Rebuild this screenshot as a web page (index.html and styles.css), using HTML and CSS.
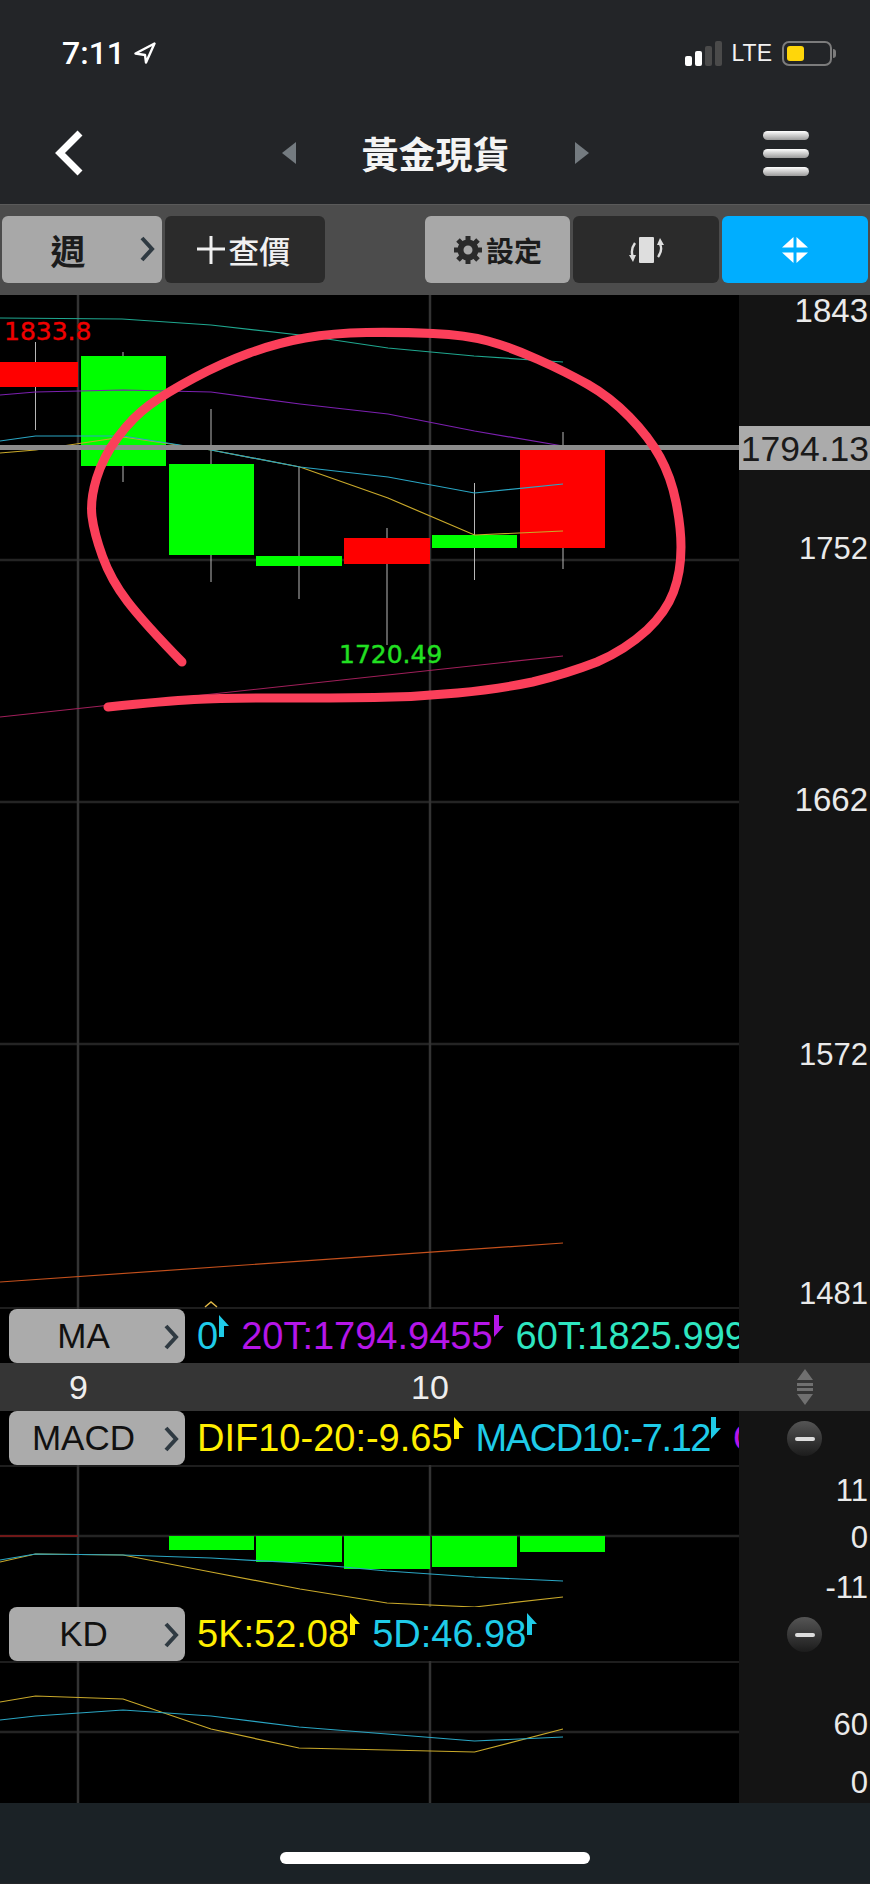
FILE: index.html
```html
<!DOCTYPE html>
<html lang="zh-Hant">
<head>
    <meta charset="UTF-8">
    <meta name="viewport" content="width=device-width, initial-scale=1.0">
    <title>黃金現貨</title>
    <link rel="stylesheet" href="styles.css">
</head>
<body>
    <div class="status-bar">
        <div class="clock">
            <span>7:11</span>
            <svg class="location" viewBox="0 0 22 22"><path d="M20.5 1.5 L1.5 11.5 L11 13 L12 20.5 Z"/></svg>
        </div>
        <div class="status-right">
            <div class="signal"><i class="s1"></i><i class="s2"></i><i class="s3"></i><i class="s4"></i></div>
            <span class="lte">LTE</span>
            <div class="battery"><div class="battery-fill"></div></div>
            <div class="battery-tip"></div>
        </div>
    </div>

    <div class="nav-bar">
        <svg class="back" viewBox="0 0 28 46"><path d="M25 3 L5 23 L25 43"/></svg>
        <div class="nav-title">
            <div class="tri tri-left"></div>
            <h1>黃金現貨</h1>
            <div class="tri tri-right"></div>
        </div>
        <div class="menu"><i></i><i></i><i></i></div>
    </div>

    <div class="toolbar">
        <div class="btn btn-light btn-period">
            <span>週</span>
            <svg class="chev" viewBox="0 0 16 26"><path d="M3 2 L13 13 L3 24"/></svg>
        </div>
        <div class="btn btn-dark btn-quote">
            <svg class="plus" viewBox="0 0 28 28"><path d="M0 13 H28 M14 0 V28"/></svg>
            <span>查價</span>
        </div>
        <div class="toolbar-gap"></div>
        <div class="btn btn-light btn-wide btn-setting">
            <svg class="gear" viewBox="0 0 30 30">
                <circle class="gear-ring" cx="15" cy="15" r="7.5"/>
                <path class="gear-teeth" d="M15 1 V7 M15 23 V29 M1 15 H7 M23 15 H29 M5 5 L9.5 9.5 M20.5 20.5 L25 25 M25 5 L20.5 9.5 M9.5 20.5 L5 25"/>
            </svg>
            <span>設定</span>
        </div>
        <div class="btn btn-dark btn-wide">
            <svg class="rotate" viewBox="0 0 35 26">
                <rect x="10" y="0" width="15" height="26" rx="1"/>
                <path class="rotate-arc" d="M6 6 Q1 13 4 20 M29 20 Q34 13 31 7"/>
                <path d="M0 18 H7 L4 25 Z M28 8 H35 L31 1 Z"/>
            </svg>
        </div>
        <div class="btn btn-blue btn-wide">
            <svg class="expand" viewBox="0 0 26 26">
                <path d="M11.5 0 V10.5 H0 Z M14.5 0 V10.5 H26 Z M0 15.5 H11.5 V26 Z M26 15.5 H14.5 V26 Z"/>
            </svg>
        </div>
    </div>

    <!-- viewBox uses page y so the numbers read the same as the screenshot -->
    <svg class="chart chart-main" viewBox="0 295 870 1014">
        <rect class="side" x="739" y="295" width="131" height="1014"/>
        <path class="grid-h" d="M0 560 H739 M0 802 H739 M0 1044 H739"/>
        <path class="grid-edge" d="M0 1308 H739"/>
        <path class="grid-v" d="M78 295 V1309 M430 295 V1309"/>

        <path class="wick" d="M35.5 342 V430 M123 352 V482 M211 409 V582 M299 467 V599 M387 528 V645 M474.5 483 V580 M563 432 V569"/>
        <rect class="up" x="0" y="362" width="78" height="25"/>
        <rect class="down" x="81" y="356" width="85" height="110"/>
        <rect class="down" x="169" y="464" width="85" height="91"/>
        <rect class="down" x="256" y="556" width="86" height="10"/>
        <rect class="up" x="344" y="538" width="86" height="26"/>
        <rect class="down" x="432" y="535" width="85" height="13"/>
        <rect class="up" x="520" y="450" width="85" height="98"/>

        <polyline class="ln ln-teal" points="0,318 122,319 211,325 300,335 388,348 474,356 563,362"/>
        <polyline class="ln ln-purple" points="0,395 35.5,392 123,390 211,392 300,404 388,414 474.5,431 563,446"/>
        <polyline class="ln ln-yellow" points="0,453 35.5,450 123,437 211,450 300,467 388,498 474.5,535 563,531"/>
        <polyline class="ln ln-cyan" points="0,441 35.5,436 123,436 211,450 300,467 388,477 474.5,493 563,484"/>
        <polyline class="ln ln-maroon" points="0,717 563,656"/>
        <polyline class="ln ln-orange" points="0,1282 563,1243"/>

        <rect class="price-line" x="0" y="445" width="739" height="5"/>
        <text class="mark mark-high" x="4" y="340">1833.8</text>
        <text class="mark mark-low" x="339" y="663">1720.49</text>
        <polyline class="caret" points="205,1307 211,1302 217,1307"/>

        <path class="scribble" d="M182 662 Q144 623 127.5 601.5 Q111 580 102.5 556.5 Q94 533 92 516.5 Q90 500 96.5 478.5 Q103 457 118 437 Q133 417 149.5 405 Q166 393 194 378 Q222 363 249.5 353 Q277 343 305 338 Q333 333 366.5 332.5 Q400 332 433 333.5 Q466 335 488 341 Q510 347 538 359.5 Q566 372 588 384.5 Q610 397 629.5 417 Q649 437 660 457 Q671 477 676 502 Q681 527 681 547 Q681 572 673.5 592 Q666 612 647 630 Q625 650 597 662 Q566 674 532.5 682 Q499 689 457.5 693 Q416 697 374.5 697.5 Q333 698 277.5 698 Q222 698 194 699.5 Q166 701 108 707"/>

        <rect class="price-box" x="739" y="426" width="131" height="44"/>
        <text class="price-text" x="869" y="461">1794.13</text>
        <text class="axis axis-wide" x="868" y="322">1843</text>
        <text class="axis" x="868" y="559">1752</text>
        <text class="axis axis-wide" x="868" y="811">1662</text>
        <text class="axis" x="868" y="1065">1572</text>
        <text class="axis" x="868" y="1304">1481</text>
    </svg>

    <div class="row">
        <div class="row-main">
            <div class="row-btn"><span>MA</span><svg class="chev" viewBox="0 0 16 26"><path d="M3 2 L13 13 L3 24"/></svg></div>
            <div class="row-values">
                <span class="c-cyan">0<svg class="tick" viewBox="0 0 10 22"><path d="M0 0 L10 11 H5 V22 H0 Z"/></svg></span>
                <span class="c-purple">20T:1794.9455<svg class="tick" viewBox="0 0 10 22"><path d="M0 22 L10 11 H5 V0 H0 Z"/></svg></span>
                <span class="c-teal">60T:1825.9999</span>
            </div>
        </div>
        <div class="row-side"></div>
    </div>

    <div class="x-axis">
        <div class="x-labels">
            <span class="x-nine">9</span>
            <span class="x-ten">10</span>
        </div>
        <div class="x-side">
            <svg class="drag" viewBox="0 0 18 36"><path d="M9 0 L17 11 H1 Z M1 14 H17 V17 H1 Z M1 19 H17 V22 H1 Z M1 25 H17 L9 36 Z"/></svg>
        </div>
    </div>

    <div class="row">
        <div class="row-main">
            <div class="row-btn"><span>MACD</span><svg class="chev" viewBox="0 0 16 26"><path d="M3 2 L13 13 L3 24"/></svg></div>
            <div class="row-values">
                <span class="c-yellow">DIF10-20:-9.65<svg class="tick" viewBox="0 0 10 22"><path d="M0 0 L10 11 H5 V22 H0 Z"/></svg></span>
                <span class="c-cyan tight">MACD10:-7.12<svg class="tick" viewBox="0 0 10 22"><path d="M0 22 L10 11 H5 V0 H0 Z"/></svg></span>
                <span class="c-purple">OSC:-2.53</span>
            </div>
        </div>
        <div class="row-side"><div class="minus"><i></i></div></div>
    </div>

    <svg class="chart chart-macd" viewBox="0 1465 870 142">
        <rect class="side" x="739" y="1465" width="131" height="142"/>
        <path class="grid-edge" d="M0 1466 H739"/>
        <path class="grid-h" d="M0 1536 H739"/>
        <path class="grid-v" d="M78 1465 V1607 M430 1465 V1607"/>
        <path class="zero-red" d="M0 1536 H78"/>
        <rect class="down" x="169" y="1536" width="85" height="14"/>
        <rect class="down" x="256" y="1536" width="86" height="26"/>
        <rect class="down" x="344" y="1536" width="86" height="33"/>
        <rect class="down" x="432" y="1536" width="85" height="31"/>
        <rect class="down" x="520" y="1536" width="85" height="16"/>
        <polyline class="ln ln-yellow" points="0,1562 35.5,1554 123,1555 211,1572 300,1589 387,1603 474.5,1607 563,1597"/>
        <polyline class="ln ln-cyan" points="0,1560 35.5,1554 123,1555 211,1558 300,1563 387,1571 474.5,1577 563,1581"/>
        <text class="axis" x="868" y="1501">11</text>
        <text class="axis" x="868" y="1548">0</text>
        <text class="axis" x="868" y="1598">-11</text>
    </svg>

    <div class="row">
        <div class="row-main">
            <div class="row-btn"><span>KD</span><svg class="chev" viewBox="0 0 16 26"><path d="M3 2 L13 13 L3 24"/></svg></div>
            <div class="row-values">
                <span class="c-yellow">5K:52.08<svg class="tick" viewBox="0 0 10 22"><path d="M0 0 L10 11 H5 V22 H0 Z"/></svg></span>
                <span class="c-cyan">5D:46.98<svg class="tick" viewBox="0 0 10 22"><path d="M0 0 L10 11 H5 V22 H0 Z"/></svg></span>
            </div>
        </div>
        <div class="row-side"><div class="minus"><i></i></div></div>
    </div>

    <svg class="chart chart-kd" viewBox="0 1662 870 142">
        <rect class="side" x="739" y="1662" width="131" height="142"/>
        <path class="grid-edge" d="M0 1663 H739"/>
        <path class="grid-h" d="M0 1733 H739"/>
        <path class="grid-v" d="M78 1662 V1804 M430 1662 V1804"/>
        <polyline class="ln ln-yellow" points="0,1703 35.5,1697 123,1700 211,1730 299,1749 387,1751 474.5,1753 563,1730"/>
        <polyline class="ln ln-cyan" points="0,1721 35.5,1717 123,1711 211,1717 299,1728 387,1735 474.5,1742 563,1738"/>
        <text class="axis" x="868" y="1736">60</text>
        <text class="axis" x="868" y="1794">0</text>
    </svg>

    <div class="home-area"><div class="home-bar"></div></div>
</body>
</html>
```

FILE: styles.css
```css
body {
    margin: 0;
    width: 870px;
    background-color: #232528;
    font-family: "Liberation Sans", Arial, sans-serif;
    overflow: hidden;
}
/* status bar */
.status-bar {
    height: 106px;
    box-sizing: border-box;
    padding-top: 36px;
    display: flex;
    justify-content: space-between;
    align-items: flex-start;
    color: #fff;
}
.clock {
    margin-left: 62px;
    display: flex;
    align-items: center;
    gap: 9px;
    font-family: Roboto, sans-serif;
    font-size: 32px;
    font-weight: 500;
    line-height: 34px;
}
.location {
    width: 22px;
    height: 22px;
    fill: none;
    stroke: #fff;
    stroke-width: 2.4;
    stroke-linejoin: round;
}
.status-right {
    display: flex;
    align-items: flex-end;
    height: 30px;
    margin-right: 34px;
}
.signal {
    display: flex;
    align-items: flex-end;
    gap: 3px;
    margin-right: 10px;
}
.signal i {
    width: 7px;
    border-radius: 2px;
    background-color: #fff;
}
.signal .s1 { height: 10px; }
.signal .s2 { height: 15px; }
.signal .s3 { height: 20px; background-color: #4a4a4a; }
.signal .s4 { height: 25px; background-color: #4a4a4a; }
.lte {
    font-size: 23px;
    line-height: 26px;
    margin-right: 10px;
    color: #f2f2f2;
}
.battery {
    width: 50px;
    height: 25px;
    box-sizing: border-box;
    padding: 3px;
    border: 2px solid #7c7c7c;
    border-radius: 7px;
}
.battery-fill {
    width: 17px;
    height: 100%;
    border-radius: 3px;
    background-color: #ffd60a;
}
.battery-tip {
    width: 3px;
    height: 9px;
    margin: 0 0 8px 1px;
    border-radius: 0 3px 3px 0;
    background-color: #7c7c7c;
}
/* nav */
.nav-bar {
    height: 98px;
    box-sizing: border-box;
    position: relative;
    display: flex;
    align-items: center;
    justify-content: space-between;
    padding: 0 61px 4px 55px;
}
.back {
    width: 28px;
    height: 46px;
    fill: none;
    stroke: #fff;
    stroke-width: 7;
}
.nav-title {
    position: absolute;
    left: 282px;
    top: 0;
    bottom: 4px;
    width: 307px;
    display: flex;
    align-items: center;
    justify-content: space-between;
}
.nav-title h1 {
    margin: 0;
    color: #f4f4f4;
    font-family: "Noto Sans CJK TC", sans-serif;
    font-size: 37px;
    font-weight: 700;
    line-height: 50px;
}
.tri {
    width: 0;
    height: 0;
    border-top: 11px solid transparent;
    border-bottom: 11px solid transparent;
}
.tri-left { border-right: 14px solid #747b80; }
.tri-right { border-left: 14px solid #747b80; }
.menu {
    display: flex;
    flex-direction: column;
    gap: 9px;
}
.menu i {
    display: block;
    width: 46px;
    height: 9px;
    border-radius: 5px;
    background: linear-gradient(#fff, #9a9a9a);
}
/* toolbar */
.toolbar {
    height: 91px;
    box-sizing: border-box;
    padding: 11px 2px 12px 2px;
    display: flex;
    gap: 3px;
    background-color: #4c4c4c;
    border-top: 1px solid #5a5a5a;
}
.btn {
    height: 67px;
    width: 160px;
    border-radius: 6px;
    display: flex;
    align-items: center;
    justify-content: center;
    font-family: "Noto Sans CJK TC", sans-serif;
    font-weight: 700;
}
.btn-wide { width: 146px; }
.btn-light {
    background-color: #a8a8a8;
    color: #1c1c1c;
}
.btn-dark {
    background-color: #2b2b2b;
    color: #f0f0f0;
}
.btn-blue { background-color: #00aeff; }
.toolbar-gap { width: 94px; }
.btn-period {
    font-size: 35px;
    position: relative;
    padding-right: 28px;
    box-sizing: border-box;
}
.btn-period .chev {
    position: absolute;
    right: 7px;
    top: 20px;
}
.chev {
    width: 16px;
    height: 26px;
    fill: none;
    stroke: #2f3a42;
    stroke-width: 4;
}
.btn-quote {
    font-size: 31px;
    font-weight: 500;
    gap: 3px;
    padding-right: 2px;
    box-sizing: border-box;
}
.plus {
    width: 28px;
    height: 28px;
    fill: none;
    stroke: #f0f0f0;
    stroke-width: 3;
}
.btn-setting {
    font-size: 28px;
    gap: 3px;
}
.gear {
    width: 30px;
    height: 30px;
    fill: none;
}
.gear-ring {
    stroke: #2a2a2a;
    stroke-width: 6;
}
.gear-teeth {
    stroke: #2a2a2a;
    stroke-width: 5;
}
.rotate {
    width: 35px;
    height: 26px;
    fill: #dedede;
}
.rotate-arc {
    fill: none;
    stroke: #dedede;
    stroke-width: 2.4;
}
.expand {
    width: 26px;
    height: 26px;
    fill: #fff;
}
/* charts */
.chart {
    display: block;
    width: 870px;
    background-color: #000;
}
.chart-main { height: 1014px; }
.chart-macd, .chart-kd { height: 142px; }
.side { fill: #141414; }
.grid-h {
    stroke: #242424;
    stroke-width: 2.5;
    fill: none;
}
.grid-edge {
    stroke: #1e1e1e;
    stroke-width: 2;
    fill: none;
}
.grid-v {
    stroke: #333;
    stroke-width: 2.5;
    fill: none;
}
.wick {
    stroke: #b8b8b8;
    stroke-width: 1;
    fill: none;
}
.up { fill: #ff0000; }
.down { fill: #00ff00; }
.ln {
    fill: none;
    stroke-width: 1.2;
}
.ln-teal { stroke: #1fa78f; }
.ln-purple { stroke: #7c20b0; }
.ln-yellow { stroke: #c9a92a; }
.ln-cyan { stroke: #2aa6c4; }
.ln-maroon { stroke: #a01f5a; }
.ln-orange { stroke: #c4501c; }
.zero-red {
    stroke: #701818;
    stroke-width: 2;
}
.price-line { fill: #8c8c8c; }
.mark {
    font-family: "DejaVu Sans", sans-serif;
    font-size: 25px;
    stroke-width: 0.4;
}
.mark-high { fill: #f00000; stroke: #f00000; }
.mark-low { fill: #22e022; stroke: #22e022; }
.caret {
    fill: none;
    stroke: #e0b848;
    stroke-width: 1.5;
}
.scribble {
    fill: none;
    stroke: #fb3f5a;
    stroke-width: 9;
    stroke-linecap: round;
    stroke-linejoin: round;
}
.price-box { fill: #ababab; }
.price-text {
    fill: #1a1a1a;
    font-size: 35.5px;
    text-anchor: end;
}
.axis {
    fill: #eaeaea;
    font-size: 31px;
    text-anchor: end;
}
.axis-wide { font-size: 33px; }
/* indicator rows */
.row {
    height: 54px;
    display: flex;
    background-color: #000;
}
.row-main {
    width: 739px;
    box-sizing: border-box;
    padding-left: 9px;
    display: flex;
    align-items: stretch;
    overflow: hidden;
    white-space: nowrap;
}
.row-side {
    flex: 1;
    background-color: #141414;
    position: relative;
}
.row-btn {
    flex: none;
    width: 176px;
    box-sizing: border-box;
    padding-right: 27px;
    border-radius: 8px;
    background-color: #ababab;
    color: #111;
    font-size: 35px;
    display: flex;
    align-items: center;
    justify-content: center;
    position: relative;
}
.row-btn .chev {
    position: absolute;
    right: 6px;
    top: 15px;
}
.row-values {
    margin-left: 12px;
    display: flex;
    gap: 12px;
    font-size: 38px;
    line-height: 54px;
}
.tight { letter-spacing: -1.4px; }
.tick {
    width: 10px;
    height: 22px;
    margin-left: 1px;
    vertical-align: 12px;
    fill: currentColor;
}
.c-cyan { color: #1fcbe8; }
.c-purple { color: #b516e8; }
.c-teal { color: #2ee6c0; }
.c-yellow { color: #ffee00; }
.minus {
    position: absolute;
    left: 48px;
    top: 10px;
    width: 35px;
    height: 35px;
    border-radius: 50%;
    background: linear-gradient(#555, #1c1c1c);
    display: flex;
    align-items: center;
    justify-content: center;
}
.minus i {
    width: 20px;
    height: 4px;
    border-radius: 2px;
    background-color: #ddd;
}
/* time axis */
.x-axis {
    height: 48px;
    display: flex;
    background-color: #353535;
}
.x-labels {
    width: 739px;
    display: flex;
    align-items: center;
    color: #eee;
    font-size: 34px;
}
.x-nine {
    margin-left: 69px;
    width: 342px;
}
.x-side {
    flex: 1;
    display: flex;
    align-items: center;
    padding-left: 57px;
}
.drag {
    width: 18px;
    height: 36px;
    fill: #707070;
}
/* home indicator */
.home-area {
    height: 80px;
    box-sizing: border-box;
    padding-top: 49px;
    background-color: #1b2226;
}
.home-bar {
    width: 310px;
    height: 12px;
    margin-left: 280px;
    border-radius: 6px;
    background-color: #fff;
}
```
